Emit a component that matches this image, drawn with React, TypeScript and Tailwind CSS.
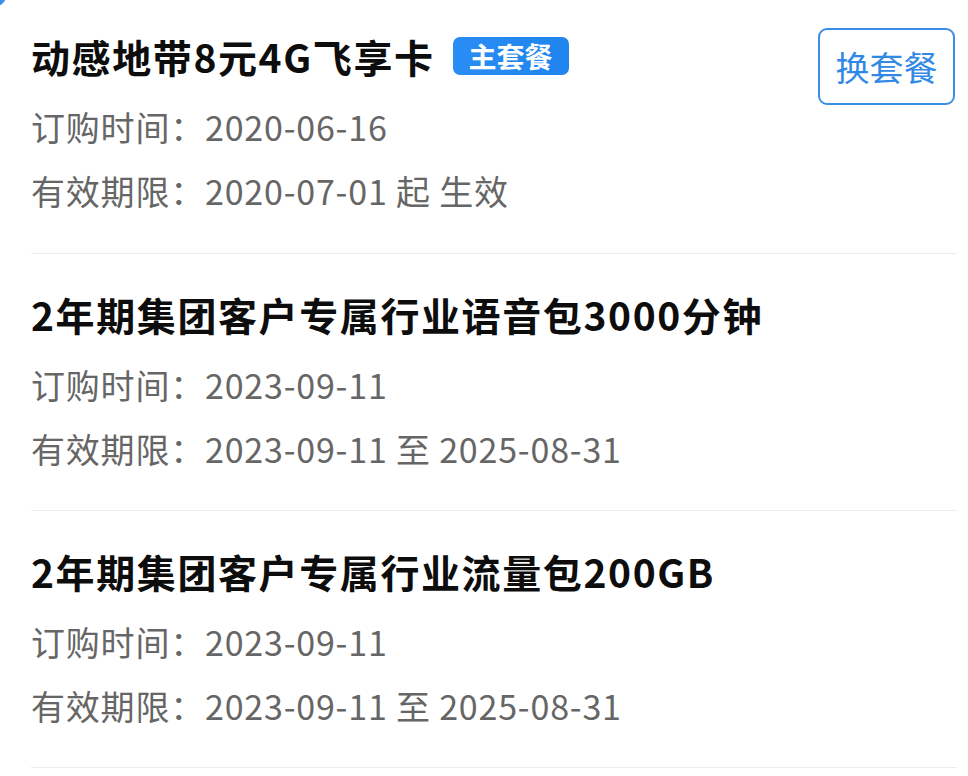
import React from "react";

type Pkg = {
  name: string;
  ordered: string;
  valid: string;
  main?: boolean;
};

const pkgs: Pkg[] = [
  { name: "动感地带8元4G飞享卡", ordered: "2020-06-16", valid: "2020-07-01 起 生效", main: true },
  { name: "2年期集团客户专属行业语音包3000分钟", ordered: "2023-09-11", valid: "2023-09-11 至 2025-08-31" },
  { name: "2年期集团客户专属行业流量包200GB", ordered: "2023-09-11", valid: "2023-09-11 至 2025-08-31" },
];

function PkgItem({ p, first }: { p: Pkg; first: boolean }) {
  return (
    <div className={`flex justify-between border-b border-[#ececec] ${first ? "pt-8 pb-[30px]" : "pt-9 pb-[29px]"}`}>
      <div>
        <div className="flex items-center h-12">
          <span className="font-bold text-[39px] text-[#0d0d0d] tracking-[1.6px]">{p.name}</span>
          {p.main && (
            <span className="bg-gradient-to-r from-[#2a8df5] to-[#1f84ee] ml-[18px] px-4 rounded-[7px] h-[38px] font-bold text-[28px] text-white leading-[38px]">
              主套餐
            </span>
          )}
        </div>
        <div className="mt-[15px] text-[34px] text-[#666] leading-[64px] tracking-[0.8px]">
          <div>订购时间：{p.ordered}</div>
          <div>有效期限：{p.valid}</div>
        </div>
      </div>
      {p.main && (
        <button className="flex justify-center items-center -mt-1 mr-[2px] border-[#3a8ee6] border-2 rounded-[9px] w-[137px] h-[77px] text-[#3189e6] text-[34px]">
          换套餐
        </button>
      )}
    </div>
  );
}

export default function App() {
  return (
    <div className="relative bg-white w-[968px] h-[776px] overflow-hidden font-['Noto_Sans_CJK_SC','Noto_Sans',sans-serif]">
      <div className="top-[-14px] left-[-14px] absolute bg-[#3b8fea] rounded-full w-5 h-5" />
      <div className="pr-[11px] pl-[31px]">
        {pkgs.map((p, i) => (
          <PkgItem key={i} p={p} first={i === 0} />
        ))}
      </div>
    </div>
  );
}
